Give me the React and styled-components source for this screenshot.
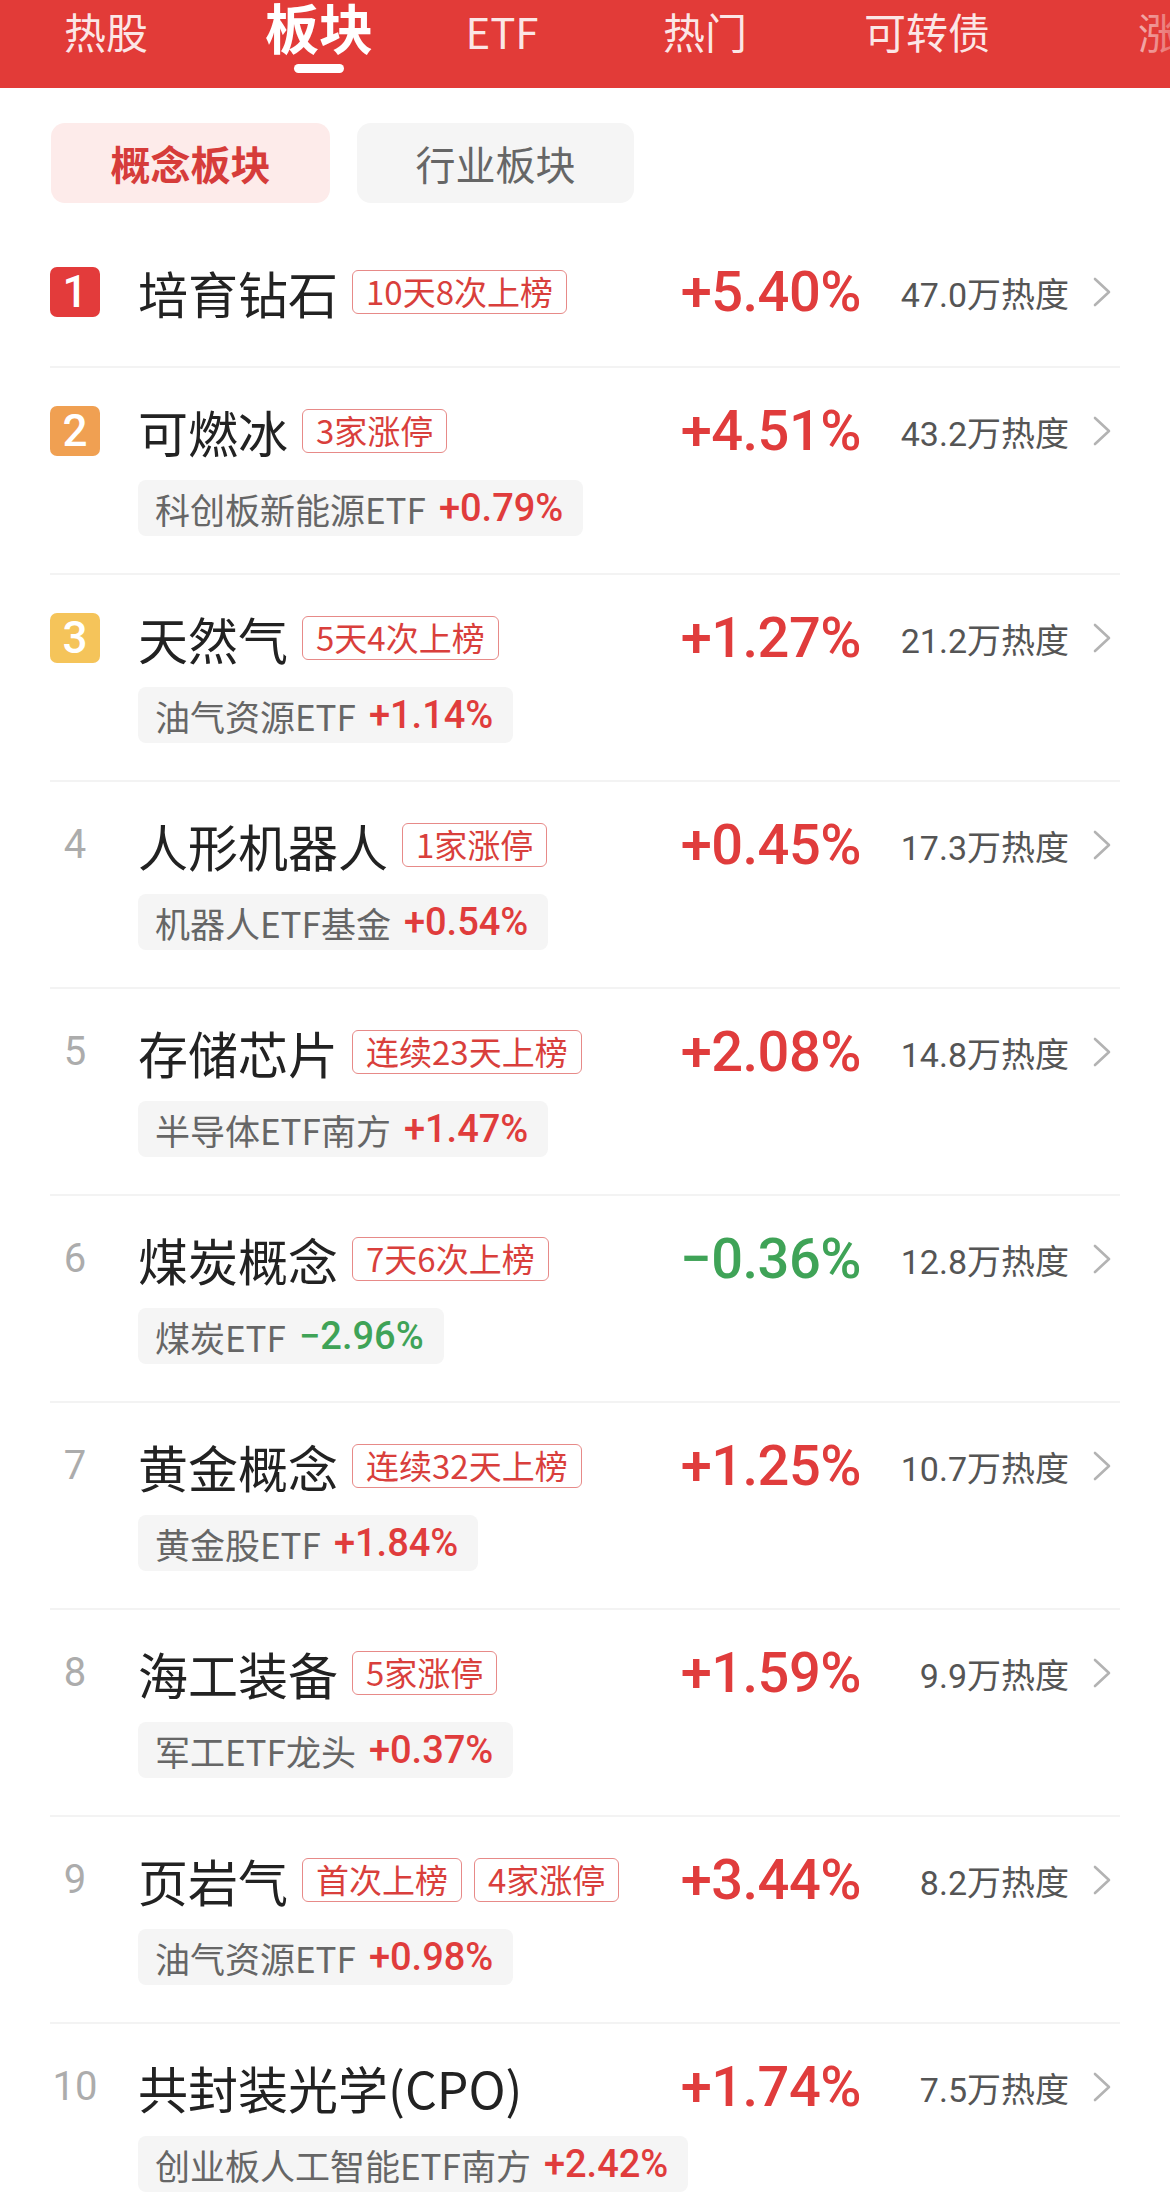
import React from "react";
import styled, { createGlobalStyle } from "styled-components";

const GlobalStyle = createGlobalStyle`
  body {
    margin: 0;
    background: #ffffff;
    font-family: "Noto Sans CJK SC", "Noto Sans", sans-serif;
  }
`;

const RED = "#e23b38";
const UP = "#e03c3c";
const DOWN = "#3fa357";

const Page = styled.div`
  width: 1170px;
  overflow: hidden;
`;

const Header = styled.div`
  position: relative;
  height: 88px;
  background: ${RED};
  display: flex;
  align-items: flex-start;
  overflow: hidden;
`;

const Tab = styled.div`
  flex: 0 0 ${(p) => p.$w}px;
  display: flex;
  flex-direction: column;
  align-items: center;
  padding-top: ${(p) => (p.$active ? 0 : 10)}px;
`;

const TabLabel = styled.span`
  font-size: ${(p) => (p.$active ? 54 : 42)}px;
  line-height: ${(p) => (p.$active ? 54 : 42)}px;
  font-weight: ${(p) => (p.$active ? 700 : 400)};
  color: ${(p) => (p.$active ? "#ffffff" : "rgba(255,255,255,0.88)")};
  white-space: nowrap;
`;

const Indicator = styled.div`
  width: 50px;
  height: 9px;
  border-radius: 5px;
  background: #ffffff;
  margin-top: 10px;
`;

const Fade = styled.div`
  position: absolute;
  right: 0;
  top: 0;
  bottom: 0;
  width: 64px;
  background: linear-gradient(
    to right,
    rgba(226, 59, 56, 0),
    rgba(226, 59, 56, 0.65)
  );
`;

const Segments = styled.div`
  display: flex;
  gap: 27px;
  padding: 35px 50px 15px 51px;
`;

const SegButton = styled.div`
  width: ${(p) => (p.$active ? 279 : 277)}px;
  height: 80px;
  border-radius: 14px;
  display: flex;
  align-items: center;
  justify-content: center;
  font-size: 40px;
  font-weight: ${(p) => (p.$active ? 700 : 400)};
  color: ${(p) => (p.$active ? "#d63c3a" : "#666666")};
  background: ${(p) => (p.$active ? "#fdebea" : "#f5f5f5")};
`;

const List = styled.div`
  padding: 0 50px;
`;

const Row = styled.div`
  box-sizing: border-box;
  border-top: ${(p) => (p.$first ? "none" : "2px solid #f3f3f3")};
  padding: ${(p) => (p.$first ? "49px 0 49px" : "38px 0 37px")};
  display: flex;
  flex-direction: column;
`;

const TopLine = styled.div`
  display: flex;
  align-items: center;
  height: 50px;
`;

const RankCell = styled.div`
  flex: 0 0 50px;
  margin-right: 38px;
  display: flex;
  justify-content: center;
  align-items: center;
`;

const Badge = styled.div`
  width: 50px;
  height: 50px;
  border-radius: 7px;
  background: ${(p) => p.$bg};
  color: #ffffff;
  font-family: Roboto, "Noto Sans", sans-serif;
  font-size: 44px;
  font-weight: 500;
  line-height: 50px;
  text-align: center;
`;

const RankNum = styled.span`
  font-family: Roboto, "Noto Sans", sans-serif;
  font-size: 40px;
  color: #acacac;
  line-height: 50px;
`;

const Title = styled.span`
  font-size: 50px;
  line-height: 50px;
  color: #222222;
  white-space: nowrap;
`;

const Tags = styled.div`
  display: flex;
  gap: 12px;
  margin-left: 14px;
`;

const Tag = styled.span`
  box-sizing: border-box;
  height: 44px;
  padding: 0 13px;
  border: 1.5px solid #e78a88;
  border-radius: 6px;
  font-size: 33px;
  line-height: 41px;
  color: #d93f3c;
  white-space: nowrap;
`;

const Pct = styled.span`
  margin-left: auto;
  font-family: Roboto, "Noto Sans", sans-serif;
  font-size: 56px;
  font-weight: 500;
  letter-spacing: -0.5px;
  line-height: 50px;
  color: ${(p) => (p.$down ? DOWN : UP)};
  white-space: nowrap;
`;

const Heat = styled.span`
  flex: 0 0 208px;
  text-align: right;
  font-family: Roboto, "Noto Sans CJK SC", sans-serif;
  font-size: 34px;
  color: #555555;
  white-space: nowrap;
`;

const ChevronCell = styled.div`
  flex: 0 0 51px;
  display: flex;
  align-items: center;
  padding-left: 23px;
  box-sizing: border-box;
`;

const Chip = styled.div`
  align-self: flex-start;
  margin: 24px 0 0 88px;
  height: 56px;
  padding: 0 20px 0 17px;
  border-radius: 8px;
  background: #f5f5f5;
  display: flex;
  align-items: center;
  font-size: 35px;
  color: #666666;
  white-space: nowrap;
`;

const ChipValue = styled.span`
  margin-left: 13px;
  font-family: Roboto, "Noto Sans", sans-serif;
  font-size: 38px;
  font-weight: 500;
  color: ${(p) => (p.$down ? DOWN : UP)};
`;

const tabs = [
  { label: "热股", w: 212 },
  { label: "板块", w: 214, active: true },
  { label: "ETF", w: 152 },
  { label: "热门", w: 254 },
  { label: "可转债", w: 190 },
  { label: "涨停", w: 316 },
];

const badgeColors = ["#e33b3b", "#f0a052", "#f5c45a"];

const rows = [
  { name: "培育钻石", tags: ["10天8次上榜"], pct: "+5.40%", heat: "47.0万热度" },
  { name: "可燃冰", tags: ["3家涨停"], pct: "+4.51%", heat: "43.2万热度", etf: "科创板新能源ETF", etfPct: "+0.79%" },
  { name: "天然气", tags: ["5天4次上榜"], pct: "+1.27%", heat: "21.2万热度", etf: "油气资源ETF", etfPct: "+1.14%" },
  { name: "人形机器人", tags: ["1家涨停"], pct: "+0.45%", heat: "17.3万热度", etf: "机器人ETF基金", etfPct: "+0.54%" },
  { name: "存储芯片", tags: ["连续23天上榜"], pct: "+2.08%", heat: "14.8万热度", etf: "半导体ETF南方", etfPct: "+1.47%" },
  { name: "煤炭概念", tags: ["7天6次上榜"], pct: "−0.36%", down: true, heat: "12.8万热度", etf: "煤炭ETF", etfPct: "−2.96%", etfDown: true },
  { name: "黄金概念", tags: ["连续32天上榜"], pct: "+1.25%", heat: "10.7万热度", etf: "黄金股ETF", etfPct: "+1.84%" },
  { name: "海工装备", tags: ["5家涨停"], pct: "+1.59%", heat: "9.9万热度", etf: "军工ETF龙头", etfPct: "+0.37%" },
  { name: "页岩气", tags: ["首次上榜", "4家涨停"], pct: "+3.44%", heat: "8.2万热度", etf: "油气资源ETF", etfPct: "+0.98%" },
  { name: "共封装光学(CPO)", tags: [], pct: "+1.74%", heat: "7.5万热度", etf: "创业板人工智能ETF南方", etfPct: "+2.42%" },
];

function Chevron() {
  return (
    <svg width="20" height="32" viewBox="0 0 20 32">
      <polyline
        points="3,3 17,16 3,29"
        fill="none"
        stroke="#b3b3b3"
        strokeWidth="2.6"
        strokeLinecap="round"
        strokeLinejoin="round"
      />
    </svg>
  );
}

export default function App() {
  return (
    <Page>
      <GlobalStyle />
      <Header>
        {tabs.map((t) => (
          <Tab key={t.label} $w={t.w} $active={t.active}>
            <TabLabel $active={t.active}>{t.label}</TabLabel>
            {t.active && <Indicator />}
          </Tab>
        ))}
        <Fade />
      </Header>

      <Segments>
        <SegButton $active>概念板块</SegButton>
        <SegButton>行业板块</SegButton>
      </Segments>

      <List>
        {rows.map((r, i) => (
          <Row key={r.name} $first={i === 0}>
            <TopLine>
              <RankCell>
                {i < 3 ? (
                  <Badge $bg={badgeColors[i]}>{i + 1}</Badge>
                ) : (
                  <RankNum>{i + 1}</RankNum>
                )}
              </RankCell>
              <Title>{r.name}</Title>
              {r.tags.length > 0 && (
                <Tags>
                  {r.tags.map((tag) => (
                    <Tag key={tag}>{tag}</Tag>
                  ))}
                </Tags>
              )}
              <Pct $down={r.down}>{r.pct}</Pct>
              <Heat>{r.heat}</Heat>
              <ChevronCell>
                <Chevron />
              </ChevronCell>
            </TopLine>
            {r.etf && (
              <Chip>
                {r.etf}
                <ChipValue $down={r.etfDown}>{r.etfPct}</ChipValue>
              </Chip>
            )}
          </Row>
        ))}
      </List>
    </Page>
  );
}
